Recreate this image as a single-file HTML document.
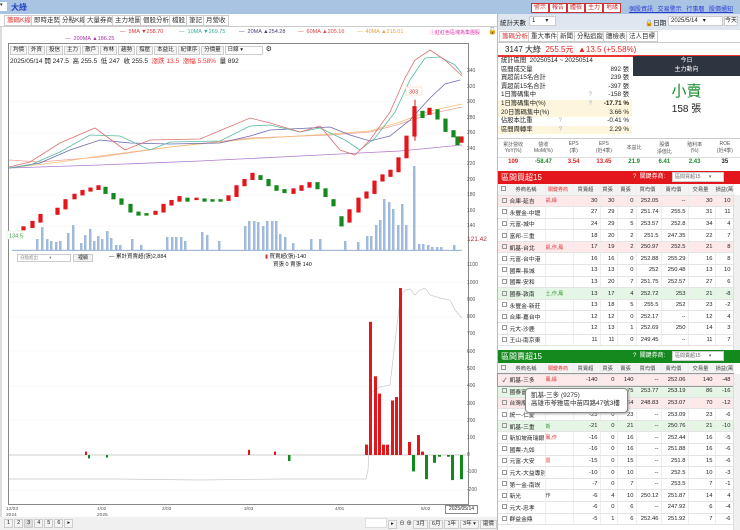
<!DOCTYPE html>
<html><head><meta charset="utf-8">
<style>
*{margin:0;padding:0;box-sizing:border-box}
body{width:740px;height:530px;overflow:hidden;background:#fff;font-family:"Liberation Sans","Noto Sans CJK TC",sans-serif;font-size:7px;color:#222;position:relative}
.a{position:absolute}
.tab{position:absolute;top:15px;height:11px;border:1px solid #ccc;background:#fff;font-size:6.5px;line-height:9px;padding:0 2px;color:#333}
.tb{display:inline-block;border:1px solid #ccc;background:#f4f4f4;font-size:5.5px;line-height:7px;padding:0 2px;margin-right:1px}
.btn{position:absolute;top:3px;height:10px;border:1px solid #c33;background:#fff;color:#c33;font-size:6px;line-height:8px;padding:0 2px}
table{border-collapse:collapse;table-layout:fixed}
.bt td{height:11.6px;border-bottom:1px solid #e4e4e4;border-right:1px solid #eee;font-size:5.8px;text-align:right;padding-right:2px;white-space:nowrap;overflow:hidden}
.bt td:nth-child(2){text-align:left;padding-left:2px}
.bt td:nth-child(3){text-align:left;font-size:5px;color:#d33}
.bt td:first-child{padding:0}
.cb{display:inline-block;width:5px;height:5px;border:1px solid #999;margin-left:2px;vertical-align:middle}
.hd td{background:#f3f3f3;text-align:center!important;height:11px;font-size:5.3px;color:#444}
.pk td{background:#fde8ea}
.gn td{background:#e6f6e6}
.st div{height:8.6px;line-height:8.6px;font-size:6.3px;position:relative;padding-left:3px}
.st span{position:absolute;right:3px}
.st .y{background:#fdf6dc}
.ax{position:absolute;left:467px;font-size:5px;color:#555}
</style></head><body>
<!-- title bar -->
<div class="a" style="left:0;top:0;width:740px;height:14px;background:#a9c3e3"></div>
<div class="a" style="left:0;top:2px;width:7px;height:9px;background:#fff;font-size:5px">▾</div>
<div class="a" style="left:11px;top:2px;font-size:8px;color:#1f3fbf;font-weight:bold">大綠</div>
<div class="btn" style="left:531px">警示</div><div class="btn" style="left:549px">報告</div><div class="btn" style="left:567px">體檢</div><div class="btn" style="left:585px">主力</div><div class="btn" style="left:603px">地緣</div>
<div class="a" style="left:629px;top:4px;font-size:6px;color:#2a3fd0;text-decoration:underline;word-spacing:3px">個股資訊 交易警示 行事曆 股價通知</div>

<!-- left tabs -->
<div class="tab" style="left:4px;color:#d33">籌碼K線</div>
<div class="tab" style="left:31px">即時走勢</div>
<div class="tab" style="left:59px">分點K線</div>
<div class="tab" style="left:84px">大量券商</div>
<div class="tab" style="left:112px">主力地圖</div>
<div class="tab" style="left:140px">個股分析</div>
<div class="tab" style="left:169px">檔股</div>
<div class="tab" style="left:186px">筆記</div>
<div class="tab" style="left:203px">月營收</div>
<div class="a" style="left:0;top:26px;width:497px;height:1px;background:#ccc"></div>
<div class="a" style="left:0;top:27px;width:2px;height:503px;background:#ddd"></div>

<div class="a" style="left:120px;top:29px;font-size:5.5px;white-space:nowrap"><span style="color:#d33">— &nbsp;5MA ▼258.70</span></div>
<div class="a" style="left:179px;top:29px;font-size:5.5px;color:#3a9"><span>— &nbsp;10MA ▼269.75</span></div>
<div class="a" style="left:239px;top:29px;font-size:5.5px;color:#447">— &nbsp;20MA ▲254.28</div>
<div class="a" style="left:298px;top:29px;font-size:5.5px;color:#d44">— &nbsp;60MA ▲205.16</div>
<div class="a" style="left:357px;top:29px;font-size:5.5px;color:#e9a23a">— &nbsp;40MA ▲215.01</div>
<div class="a" style="left:430px;top:29px;font-size:5px;color:#d3a">ⓘ紅紅色區塊為集團股</div>
<div class="a" style="left:488px;top:27px;font-size:7px">🔓</div>
<div class="a" style="left:65px;top:36px;font-size:5.5px;color:#a3a">— &nbsp;200MA ▲186.25</div>

<!-- chart frame -->
<div class="a" style="left:8px;top:43px;width:461px;height:462px;border:1px solid #888;border-top:1px solid #888"></div>
<div class="a" style="left:10px;top:45px;white-space:nowrap"><span class="tb">均價</span><span class="tb">外資</span><span class="tb">投信</span><span class="tb">主力</span><span class="tb">散戶</span><span class="tb">布林</span><span class="tb">趨勢</span><span class="tb">撐壓</span><span class="tb">本益比</span><span class="tb">紀律序</span><span class="tb">分價量</span><span class="tb" style="width:38px;background:#fff">日線 ▾</span> ⚙</div>
<div class="a" style="left:10px;top:55px;font-size:6.5px;white-space:nowrap">2025/05/14 開 247.5 &nbsp;高 255.5 &nbsp;低 247 &nbsp;收 255.5 &nbsp;<span style="color:#e33">漲跌 13.5 &nbsp;漲幅 5.58%</span> &nbsp;量 892</div>

<svg class="a" style="left:0;top:0" width="497" height="530">
<g stroke="#f2f2f2" stroke-width="0.6">
<line x1="9" y1="71" x2="468" y2="71"/><line x1="9" y1="102" x2="468" y2="102"/><line x1="9" y1="133" x2="468" y2="133"/><line x1="9" y1="164" x2="468" y2="164"/><line x1="9" y1="195" x2="468" y2="195"/><line x1="9" y1="226" x2="468" y2="226"/>
<line x1="9" y1="282" x2="468" y2="282"/><line x1="9" y1="317" x2="468" y2="317"/><line x1="9" y1="351" x2="468" y2="351"/><line x1="9" y1="386" x2="468" y2="386"/><line x1="9" y1="420" x2="468" y2="420"/><line x1="9" y1="490" x2="468" y2="490"/>
</g>
<!-- volume -->
<g transform="translate(0,251) scale(1,-1)" fill="#9fbadb">
<rect x="36" y="0" width="2.5" height="12"/><rect x="41" y="0" width="2.5" height="24"/><rect x="46" y="0" width="2.5" height="12"/><rect x="50" y="0" width="2.5" height="10"/><rect x="55" y="0" width="2.5" height="9"/><rect x="59" y="0" width="2.5" height="10"/><rect x="67" y="0" width="2.5" height="18"/><rect x="72" y="0" width="2.5" height="26"/><rect x="80" y="0" width="2.5" height="8"/><rect x="84" y="0" width="2.5" height="16"/><rect x="89" y="0" width="2.5" height="22"/><rect x="93" y="0" width="2.5" height="10"/><rect x="97" y="0" width="2.5" height="15"/><rect x="101" y="0" width="2.5" height="12"/><rect x="106" y="0" width="2.5" height="20"/><rect x="110" y="0" width="2.5" height="13"/><rect x="115" y="0" width="2.5" height="6"/><rect x="119" y="0" width="2.5" height="6"/><rect x="131" y="0" width="2.5" height="12"/><rect x="140" y="0" width="2.5" height="6"/><rect x="166" y="0" width="2.5" height="14"/><rect x="171" y="0" width="2.5" height="14"/><rect x="175" y="0" width="2.5" height="14"/><rect x="180" y="0" width="2.5" height="14"/><rect x="184" y="0" width="2.5" height="10"/><rect x="201" y="0" width="2.5" height="19"/><rect x="206" y="0" width="2.5" height="16"/><rect x="218" y="0" width="2.5" height="10"/><rect x="244" y="0" width="2.5" height="25"/><rect x="248" y="0" width="2.5" height="30"/><rect x="253" y="0" width="2.5" height="30"/><rect x="257" y="0" width="2.5" height="29"/><rect x="262" y="0" width="2.5" height="25"/><rect x="266" y="0" width="2.5" height="30"/><rect x="271" y="0" width="2.5" height="30"/><rect x="275" y="0" width="2.5" height="30"/><rect x="279" y="0" width="2.5" height="17"/><rect x="284" y="0" width="2.5" height="14"/><rect x="292" y="0" width="2.5" height="8"/><rect x="310" y="0" width="2.5" height="12"/><rect x="319" y="0" width="2.5" height="12"/><rect x="344" y="0" width="2.5" height="10"/><rect x="357" y="0" width="2.5" height="9"/><rect x="366" y="0" width="2.5" height="15"/><rect x="370" y="0" width="2.5" height="15"/><rect x="375" y="0" width="2.5" height="26"/><rect x="379" y="0" width="2.5" height="31"/><rect x="383" y="0" width="2.5" height="52"/><rect x="388" y="0" width="2.5" height="49"/><rect x="392" y="0" width="2.5" height="42"/><rect x="397" y="0" width="2.5" height="26"/><rect x="401" y="0" width="2.5" height="47"/><rect x="405" y="0" width="2.5" height="26"/><rect x="413" y="0" width="2.5" height="85"/><rect x="418" y="0" width="2.5" height="7"/><rect x="422" y="0" width="2.5" height="7"/><rect x="427" y="0" width="2.5" height="6"/><rect x="431" y="0" width="2.5" height="4"/><rect x="436" y="0" width="2.5" height="4"/><rect x="440" y="0" width="2.5" height="4"/><rect x="453" y="0" width="2.5" height="6"/>
<rect x="12" y="0" width="450" height="1.2" fill="#9fbadb"/>
</g>
<!-- MAs -->
<g fill="none" stroke-width="0.8">
<polyline stroke="#f0a0a0" points="9,160 40,162 100,157 170,147 250,138 330,135 370,132 400,124 430,114 462,107"/>
<polyline stroke="#f2c070" points="9,168 60,162 100,156 170,147 250,139 330,134 370,131 400,122 430,111 462,104"/>
<polyline stroke="#b07ad0" points="9,168 100,165 200,161 300,156 400,151 462,145"/>
<polyline stroke="#6a6ab0" points="9,168 40,163 70,150 100,140 130,143 170,144 220,143 250,136 270,130 310,128 330,127 350,135 370,141 390,136 410,120 430,98 445,84 460,80"/>
<polyline stroke="#55bba0" points="9,168 30,165 60,152 90,135 120,136 150,150 170,142 220,141 250,126 270,125 300,132 320,128 345,140 360,150 375,138 395,112 410,80 425,58 440,57 455,65 462,74"/>
<polyline stroke="#e07070" points="9,167 30,162 60,143 95,128 125,150 150,140 200,139 250,118 270,123 300,132 320,126 340,150 355,155 370,140 390,112 405,78 415,60 430,50 445,60 462,76"/>
</g>
<!-- candles (flipped price coords) -->
<g transform="translate(0,334.5) scale(1,-0.775)" stroke-width="1.2">
<g fill="#e3161b" stroke="#e3161b">
<rect x="22" y="135" width="3" height="4"/><rect x="31" y="138" width="3" height="8"/><rect x="39" y="145" width="3" height="10"/><rect x="56" y="155" width="3" height="8"/><rect x="64" y="162" width="3" height="12"/><rect x="73" y="175" width="3" height="6"/><rect x="81" y="180" width="3" height="6"/><rect x="89" y="185" width="3" height="4"/><rect x="97" y="187" width="3" height="5"/><rect x="154" y="155" width="3" height="4"/><rect x="162" y="158" width="3" height="10"/><rect x="170" y="167" width="3" height="6"/><rect x="178" y="172" width="3" height="6"/><rect x="195" y="174" width="3" height="2"/><rect x="227" y="173" width="3" height="6"/><rect x="235" y="178" width="3" height="14"/><rect x="243" y="192" width="3" height="8"/><rect x="251" y="200" width="3" height="8"/><rect x="292" y="182" width="3" height="6"/><rect x="300" y="186" width="3" height="6"/><rect x="308" y="190" width="3" height="6"/><rect x="348" y="145" width="3" height="16"/><rect x="357" y="158" width="3" height="18"/><rect x="365" y="176" width="3" height="8"/><rect x="373" y="182" width="3" height="16"/><rect x="381" y="198" width="3" height="8"/><rect x="389" y="204" width="3" height="8"/><rect x="397" y="210" width="3" height="18"/><rect x="405" y="228" width="3" height="28"/><rect x="413" y="256" width="3" height="38"/><rect x="428" y="284" width="3" height="8"/><rect x="460" y="248" width="3" height="7"/>
<line x1="415" y1="250" x2="415" y2="303" stroke-width="1"/>
</g>
<g fill="#148a1e" stroke="#148a1e">
<rect x="104" y="182" width="3" height="8"/><rect x="112" y="175" width="3" height="7"/><rect x="120" y="168" width="3" height="7"/><rect x="129" y="158" width="3" height="10"/><rect x="137" y="154" width="3" height="4"/><rect x="145" y="154" width="3" height="2"/><rect x="186" y="172" width="3" height="4"/><rect x="203" y="172" width="3" height="3"/><rect x="211" y="172" width="3" height="2"/><rect x="219" y="172" width="3" height="2"/><rect x="259" y="200" width="3" height="5"/><rect x="267" y="192" width="3" height="8"/><rect x="275" y="186" width="3" height="6"/><rect x="283" y="183" width="3" height="4"/><rect x="316" y="188" width="3" height="8"/><rect x="324" y="178" width="3" height="10"/><rect x="332" y="166" width="3" height="8"/><rect x="340" y="140" width="3" height="12"/><rect x="421" y="280" width="3" height="8"/><rect x="436" y="278" width="3" height="12"/><rect x="444" y="262" width="3" height="16"/><rect x="452" y="255" width="3" height="8"/><rect x="456" y="245" width="3" height="10"/>
</g>
</g>
<rect x="406" y="87" width="16" height="8" fill="#fff" stroke="#f3c8b0" stroke-width="0.5"/>
<text x="409" y="93.5" font-size="5.5" fill="#d33" font-family="Liberation Sans">303</text>
<rect x="7" y="231" width="16" height="8" fill="#fff" stroke="#cdeccd" stroke-width="0.5"/>
<text x="9" y="237.5" font-size="5.5" fill="#393" font-family="Liberation Sans">134.5</text>
<!-- lower chart -->
<line x1="9" y1="455" x2="466" y2="455" stroke="#999" stroke-width="0.6"/>
<polyline fill="none" stroke="#c8c8c8" stroke-width="0.7" points="9,479 120,479 200,480 280,479 366,479 368,470 372,392 380,387 390,385 400,300 402,295 405,290 410,289 415,295 420,290 425,288 430,295 440,298 450,300 455,310 462,318"/>
<g transform="translate(0,455) scale(1,-0.173)">
<g fill="#e3161b"><rect x="365" y="0" width="3" height="60"/><rect x="369" y="0" width="3" height="770"/><rect x="374" y="0" width="3" height="455"/><rect x="378" y="0" width="3" height="355"/><rect x="382" y="0" width="3" height="60"/><rect x="386" y="0" width="3" height="60"/><rect x="391" y="0" width="3" height="315"/><rect x="395" y="0" width="3" height="335"/><rect x="399" y="0" width="3" height="965"/><rect x="408" y="0" width="3" height="75"/><rect x="417" y="0" width="3" height="115"/><rect x="421" y="0" width="3" height="20"/><rect x="248" y="0" width="2" height="30"/><rect x="274" y="0" width="2" height="20"/><rect x="85" y="0" width="2" height="20"/></g>
<g fill="#148a1e"><rect x="412" y="-95" width="3" height="95"/><rect x="425" y="-140" width="3" height="140"/><rect x="433" y="-45" width="3" height="45"/><rect x="438" y="-10" width="3" height="10"/><rect x="447" y="-10" width="3" height="10"/><rect x="451" y="-145" width="3" height="145"/><rect x="460" y="-140" width="3" height="140"/><rect x="288" y="-35" width="2.5" height="35"/><rect x="88" y="-20" width="2" height="20"/><rect x="106" y="-15" width="2" height="15"/></g>
</g>
</svg>
<div class="ax" style="top:68px">340</div><div class="ax" style="top:84px">320</div><div class="ax" style="top:99px">300</div><div class="ax" style="top:115px">280</div><div class="ax" style="top:130px">260</div><div class="ax" style="top:146px">240</div><div class="ax" style="top:161px">220</div><div class="ax" style="top:177px">200</div><div class="ax" style="top:192px">180</div><div class="ax" style="top:208px">160</div><div class="ax" style="top:223px">140</div>
<div class="ax" style="top:236px;font-size:6.5px;color:#a33">121.42</div>
<div class="ax" style="top:262px">1100</div><div class="ax" style="top:280px">1000</div><div class="ax" style="top:297px">900</div><div class="ax" style="top:314px">800</div><div class="ax" style="top:331px">700</div><div class="ax" style="top:349px">600</div><div class="ax" style="top:366px">500</div><div class="ax" style="top:383px">400</div><div class="ax" style="top:401px">300</div><div class="ax" style="top:418px">200</div><div class="ax" style="top:435px">100</div><div class="ax" style="top:452px">0</div><div class="ax" style="top:469px">-100</div><div class="ax" style="top:487px">-200</div>
<div class="a" style="left:17px;top:254px;width:54px;height:8px;border:1px solid #ccc;font-size:4.5px;color:#888;line-height:6px;padding-left:2px">分點進出 &nbsp; &nbsp; &nbsp; &nbsp; ▾</div>
<div class="a" style="left:73px;top:254px;width:20px;height:8px;border:1px solid #ccc;background:#f2f2f2;font-size:5px;line-height:6px;text-align:center">裡顯</div>
<div class="a" style="left:109px;top:252px;font-size:5.5px">— 累計買賣超(張)2,884</div>
<div class="a" style="left:265px;top:252px;font-size:5.5px"><span style="color:#d33">▮</span> 買賣超(張)-140</div>
<div class="a" style="left:273px;top:260px;font-size:5.5px">買張 0 賣張 140</div>
<div class="a" style="left:6px;top:507px;font-size:4.8px;line-height:5.5px;color:#555">12/03<br>2024</div>
<div class="a" style="left:97px;top:507px;font-size:4.8px;line-height:5.5px;color:#555">1/02<br>2025</div>
<div class="a" style="left:162px;top:507px;font-size:4.8px;color:#555">2/03</div>
<div class="a" style="left:244px;top:507px;font-size:4.8px;color:#555">3/03</div>
<div class="a" style="left:335px;top:507px;font-size:4.8px;color:#555">4/01</div>
<div class="a" style="left:421px;top:507px;font-size:4.8px;color:#555">5/02</div>
<div class="a" style="left:445px;top:505px;width:33px;height:9px;border:1px solid #888;background:#fff;font-size:5px;line-height:7px;text-align:center">2025/05/14</div>
<div class="a" style="left:0;top:517px;width:497px;height:13px;background:#f0f0f0"></div>
<div class="a" style="left:4px;top:519px;font-size:5.5px;white-space:nowrap"><span class="tb">1</span><span class="tb">2</span><span class="tb" style="background:#ddd">3</span><span class="tb">4</span><span class="tb">5</span><span class="tb">6</span><span class="tb">▸</span></div>
<div class="a" style="left:365px;top:518px;width:22px;height:10px;background:#fff;border:1px solid #ddd"></div>
<div class="a" style="left:388px;top:519px;font-size:5.5px;white-space:nowrap"><span class="tb">▸</span> ⊖ ⊕ <span class="tb">3月</span><span class="tb">6月</span><span class="tb">1年</span><span class="tb">3年 ▾</span><span class="tb">還價</span></div>
<div class="a" style="left:497px;top:14px;width:1px;height:516px;background:#bbb"></div>

<!-- right panel -->
<div class="a" style="left:498px;top:14px;width:242px;height:16px;background:#dfe6f0"></div>
<div class="a" style="left:500px;top:17px;font-size:6.5px">統計天數</div>
<div class="a" style="left:529px;top:16px;width:27px;height:10px;background:#fff;border:1px solid #ccc;font-size:6px;line-height:8px;padding-left:2px">1 &nbsp; &nbsp; &nbsp;▾</div>
<div class="a" style="left:645px;top:17px;font-size:6.5px">🔒日期</div>
<div class="a" style="left:668px;top:16px;width:55px;height:10px;background:#fff;border:1px solid #ccc;font-size:6px;line-height:8px;padding-left:2px">2025/5/14 &nbsp; ▾</div>
<div class="a" style="left:724px;top:16px;width:14px;height:10px;background:#fff;border:1px solid #ccc;font-size:6px;line-height:8px">今天</div>
<div class="tab" style="left:499px;top:31px;color:#d33">籌碼分析</div>
<div class="tab" style="left:528px;top:31px">重大事件</div>
<div class="tab" style="left:557px;top:31px">新聞</div>
<div class="tab" style="left:574px;top:31px">分點追蹤</div>
<div class="tab" style="left:603px;top:31px">體檢表</div>
<div class="tab" style="left:626px;top:31px">法人目標</div>
<div class="a" style="left:498px;top:42px;width:242px;height:1px;background:#ccc"></div>
<div class="a" style="left:505px;top:44px;font-size:8px;white-space:nowrap"><b style="font-weight:normal">3147 大綠</b> &nbsp;<span style="color:#e22">255.5元 &nbsp;▲13.5 (+5.58%)</span></div>
<div class="a" style="left:498px;top:55px;width:242px;height:1.5px;background:#e33"></div>
<div class="a st" style="left:498px;top:57px;width:134px">
<div>統計區間 &nbsp;20250514 ~ 20250514</div>
<div>區間成交量<span>892 張</span></div>
<div>買超前15名合計<span>239 張</span></div>
<div>賣超前15名合計<span>-397 張</span></div>
<div>1日籌碼集中<span style="right:40px;color:#9ab">?</span><span>-158 張</span></div>
<div class="y">1日籌碼集中(%)<span style="right:40px;color:#9ab">?</span><span style="font-weight:bold">-17.71 %</span></div>
<div class="y">20日籌碼集中(%)<span>3.66 %</span></div>
<div>佔股本比重<span style="right:70px;color:#9ab">?</span><span>-0.41 %</span></div>
<div class="y">區間周轉率<span style="right:70px;color:#9ab">?</span><span>2.29 %</span></div>
</div>
<div class="a" style="left:633px;top:56px;width:107px;height:20px;background:#2f3540;color:#fff;font-size:6px;text-align:center;line-height:9px;padding-top:1px">今日<br>主力動向</div>
<div class="a" style="left:633px;top:80px;width:107px;text-align:center;font-size:15px;color:#1a8a2a">小賣</div>
<div class="a" style="left:633px;top:100px;width:107px;text-align:center;font-size:10px">158 張</div>
<div class="a" style="left:498px;top:138px;width:242px;height:1px;background:#ccc"></div>
<table class="a" style="left:498px;top:139px;width:242px;font-size:5px;text-align:center">
<tr style="height:18px;color:#555"><td>累計營收<br>YoY(%)</td><td>營收<br>MoM(%)</td><td>EPS<br>(季)</td><td>EPS<br>(近4季)</td><td>本益比</td><td>股價<br>淨值比</td><td>殖利率<br>(%)</td><td>ROE<br>(近4季)</td></tr>
<tr style="height:10px;font-size:6px;font-weight:bold;border-top:1px solid #ddd"><td style="color:#d22">109</td><td style="color:#1a8a2a">-58.47</td><td style="color:#d22">3.54</td><td style="color:#d22">13.45</td><td style="color:#1a8a2a">21.9</td><td style="color:#1a8a2a">6.41</td><td style="color:#1a8a2a">2.43</td><td>35</td></tr>
</table>

<!-- buy table -->
<div class="a" style="left:498px;top:171px;width:242px;height:13px;background:#e3161b;color:#fff;font-size:8px;line-height:13px;padding-left:3px">區間買超15<span style="position:absolute;left:135px;font-size:6px">? &nbsp;關鍵券商:</span></div>
<div class="a" style="left:672px;top:172px;width:52px;height:10px;background:#fff;border:1px solid #ccc;font-size:5px;line-height:8px;color:#666;padding-left:2px">區間買超15 &nbsp; &nbsp; &nbsp;▾</div>
<table class="a bt" style="left:498px;top:184px;width:235px">
<colgroup><col style="width:9px"><col style="width:38px"><col style="width:28px"><col style="width:27px"><col style="width:17px"><col style="width:19px"><col style="width:25px"><col style="width:27px"><col style="width:27px"><col style="width:18px"></colgroup>
<tr class="hd"><td><span class="cb"></span></td><td>券商名稱</td><td>關鍵券商</td><td>買賣超</td><td>買張</td><td>賣張</td><td>買均價</td><td>賣均價</td><td>交易量</td><td>損益(萬)</td></tr>
<tr class="pk"><td><span class="cb"></span></td><td>合庫-延吉</td><td>凱,緣</td><td>30</td><td>30</td><td>0</td><td>252.05</td><td>--</td><td>30</td><td>10</td></tr>
<tr><td><span class="cb"></span></td><td>永豐金-中壢</td><td></td><td>27</td><td>29</td><td>2</td><td>251.74</td><td>255.5</td><td>31</td><td>11</td></tr>
<tr><td><span class="cb"></span></td><td>元富-城中</td><td></td><td>24</td><td>29</td><td>5</td><td>253.57</td><td>252.8</td><td>34</td><td>4</td></tr>
<tr><td><span class="cb"></span></td><td>富邦-三重</td><td></td><td>18</td><td>20</td><td>2</td><td>251.5</td><td>247.35</td><td>22</td><td>7</td></tr>
<tr class="pk"><td><span class="cb"></span></td><td>凱基-台北</td><td>凱,作,鳳</td><td>17</td><td>19</td><td>2</td><td>250.97</td><td>252.5</td><td>21</td><td>8</td></tr>
<tr><td><span class="cb"></span></td><td>元富-台中港</td><td></td><td>16</td><td>16</td><td>0</td><td>252.88</td><td>255.29</td><td>16</td><td>8</td></tr>
<tr><td><span class="cb"></span></td><td>國票-長城</td><td></td><td>13</td><td>13</td><td>0</td><td>252</td><td>250.48</td><td>13</td><td>10</td></tr>
<tr><td><span class="cb"></span></td><td>國票-安和</td><td></td><td>13</td><td>20</td><td>7</td><td>251.75</td><td>252.57</td><td>27</td><td>6</td></tr>
<tr class="gn"><td><span class="cb"></span></td><td>國泰-敦南</td><td style="color:#393">土,作,鳳</td><td>13</td><td>17</td><td>4</td><td>252.72</td><td>253</td><td>21</td><td>-8</td></tr>
<tr><td><span class="cb"></span></td><td>永豐金-新莊</td><td></td><td>13</td><td>18</td><td>5</td><td>255.5</td><td>252</td><td>23</td><td>-2</td></tr>
<tr><td><span class="cb"></span></td><td>合庫-嘉台中</td><td></td><td>12</td><td>12</td><td>0</td><td>252.17</td><td>--</td><td>12</td><td>4</td></tr>
<tr><td><span class="cb"></span></td><td>元大-沙鹿</td><td></td><td>12</td><td>13</td><td>1</td><td>252.69</td><td>250</td><td>14</td><td>3</td></tr>
<tr><td><span class="cb"></span></td><td>王山-南京東</td><td></td><td>11</td><td>11</td><td>0</td><td>249.45</td><td>--</td><td>11</td><td>7</td></tr>
</table>
<div class="a" style="left:733px;top:195px;width:7px;height:155px;background:#f0f0f0;border-left:1px solid #ddd"></div>

<!-- sell table -->
<div class="a" style="left:498px;top:350px;width:242px;height:13px;background:#148a1e;color:#fff;font-size:8px;line-height:13px;padding-left:3px">區間賣超15<span style="position:absolute;left:135px;font-size:6px">? &nbsp;關鍵券商:</span></div>
<div class="a" style="left:672px;top:351px;width:52px;height:10px;background:#fff;border:1px solid #ccc;font-size:5px;line-height:8px;color:#666;padding-left:2px">區間賣超15 &nbsp; &nbsp; &nbsp;▾</div>
<table class="a bt" style="left:498px;top:363px;width:235px">
<colgroup><col style="width:9px"><col style="width:38px"><col style="width:28px"><col style="width:27px"><col style="width:17px"><col style="width:19px"><col style="width:25px"><col style="width:27px"><col style="width:27px"><col style="width:18px"></colgroup>
<tr class="hd"><td><span class="cb"></span></td><td>券商名稱</td><td>關鍵券商</td><td>買賣超</td><td>買張</td><td>賣張</td><td>買均價</td><td>賣均價</td><td>交易量</td><td>損益(萬)</td></tr>
<tr class="pk" style="outline:1px solid #999"><td>✓</td><td>凱基-三多</td><td>鳳,緣</td><td>-140</td><td>0</td><td>140</td><td>--</td><td>252.06</td><td>140</td><td>-48</td></tr>
<tr class="gn"><td><span class="cb"></span></td><td>國泰富邦</td><td></td><td>-75</td><td>0</td><td>75</td><td>253.77</td><td>253.19</td><td>86</td><td>-16</td></tr>
<tr class="pk"><td><span class="cb"></span></td><td>台灣摩根</td><td></td><td>-64</td><td>0</td><td>64</td><td>248.83</td><td>253.07</td><td>70</td><td>-12</td></tr>
<tr><td><span class="cb"></span></td><td>統一-仁愛</td><td></td><td>-23</td><td>0</td><td>23</td><td>--</td><td>253.09</td><td>23</td><td>-6</td></tr>
<tr class="gn"><td><span class="cb"></span></td><td>凱基-三重</td><td style="color:#393">新</td><td>-21</td><td>0</td><td>21</td><td>--</td><td>250.76</td><td>21</td><td>-10</td></tr>
<tr><td><span class="cb"></span></td><td>新加坡商瑞銀</td><td>鳳,作</td><td>-16</td><td>0</td><td>16</td><td>--</td><td>252.44</td><td>16</td><td>-5</td></tr>
<tr><td><span class="cb"></span></td><td>國票-九如</td><td></td><td>-16</td><td>0</td><td>16</td><td>--</td><td>251.88</td><td>16</td><td>-6</td></tr>
<tr><td><span class="cb"></span></td><td>元富-大安</td><td>雷</td><td>-15</td><td>0</td><td>15</td><td>--</td><td>251.8</td><td>15</td><td>-6</td></tr>
<tr><td><span class="cb"></span></td><td>元大-大益專別</td><td></td><td>-10</td><td>0</td><td>10</td><td>--</td><td>252.5</td><td>10</td><td>-3</td></tr>
<tr><td><span class="cb"></span></td><td>第一金-南崁</td><td></td><td>-7</td><td>0</td><td>7</td><td>--</td><td>253.5</td><td>7</td><td>-1</td></tr>
<tr><td><span class="cb"></span></td><td>新光</td><td style="color:#333">作</td><td>-6</td><td>4</td><td>10</td><td>250.12</td><td>251.87</td><td>14</td><td>4</td></tr>
<tr><td><span class="cb"></span></td><td>元大-忠孝</td><td></td><td>-6</td><td>0</td><td>6</td><td>--</td><td>247.92</td><td>6</td><td>-4</td></tr>
<tr><td><span class="cb"></span></td><td>群益金鼎</td><td></td><td>-5</td><td>1</td><td>6</td><td>252.46</td><td>251.92</td><td>7</td><td>-6</td></tr>
</table>
<div class="a" style="left:733px;top:374px;width:7px;height:156px;background:#f0f0f0;border-left:1px solid #ddd"></div>
<div class="a" style="left:525px;top:388px;width:103px;height:25px;background:#fff;border:1px solid #888;border-radius:4px;font-size:6.5px;line-height:8px;padding:3px 0 0 5px;color:#333;box-shadow:1px 1px 2px #aaa">凱基-三多 (9275)<br>高雄市苓雅區中苗四路47號3樓</div>
</body></html>
